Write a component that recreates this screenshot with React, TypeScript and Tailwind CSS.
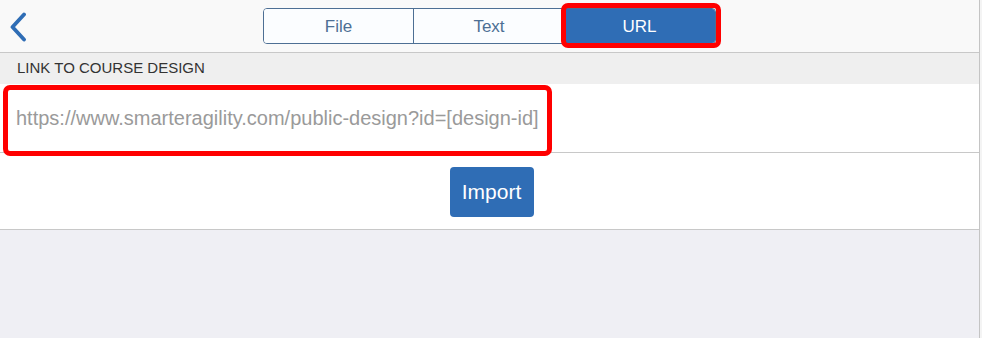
import React from "react";

export default function App() {
  return (
    <div
      className="w-[982px] h-[338px] bg-[#efeff4] flex overflow-hidden"
      style={{ fontFamily: '"Liberation Sans", Arial, sans-serif' }}
    >
      <div className="w-[980px] border-r border-[#c4c4c4] flex flex-col relative">
        {/* Header */}
        <div className="h-[53px] bg-[#f9f9f9] border-b border-[#c8c8c8] flex items-center justify-center relative">
          <button className="absolute left-[8px] top-[12px] w-[20px] h-[30px] flex items-center justify-center">
            <svg width="18" height="30" viewBox="0 0 18 30" fill="none">
              <path d="M15 2.5 L3.5 15 L15 27.5" stroke="#2f6db5" strokeWidth="3.8" strokeLinecap="round" strokeLinejoin="round" />
            </svg>
          </button>
          <div className="flex h-[36px] mt-[-1px] rounded-[4px] border border-[#4d6f94] overflow-hidden">
            <div className="w-[150px] flex items-center justify-center pt-[3px] text-[17px] text-[#4d6f94] bg-[#fbfdff] border-r border-[#4d6f94]">File</div>
            <div className="w-[150px] flex items-center justify-center pt-[3px] text-[17px] text-[#4d6f94] bg-[#fbfdff]">Text</div>
            <div className="w-[151px] flex items-center justify-center pt-[3px] text-[17px] text-white bg-[#2f6db5]">URL</div>
          </div>
          <div className="absolute left-[561px] top-[3px] w-[160px] h-[45px] border-[5px] border-[#ff0000] rounded-[7px]" />
        </div>

        {/* Section header */}
        <div className="h-[31px] bg-[#efefef] flex items-center pl-[17px] text-[15px] text-[#333333]">
          LINK TO COURSE DESIGN
        </div>

        {/* Input row */}
        <div className="h-[69px] bg-white border-b border-[#c8c8c8] flex items-center relative">
          <input
            className="w-full h-full pl-[16px] text-[20px] outline-none bg-transparent placeholder:text-[#9a9a9a]"
            placeholder="https://www.smarteragility.com/public-design?id=[design-id]"
            style={{ fontFamily: '"Liberation Sans", Arial, sans-serif' }}
          />
          <div className="absolute left-[3px] top-[1px] w-[549px] h-[71px] border-[5px] border-[#ff0000] rounded-[7px] pointer-events-none" />
        </div>

        {/* Import row */}
        <div className="h-[77px] bg-white border-b border-[#c8c8c8] flex items-center justify-center">
          <button className="w-[84px] h-[50px] mt-[1px] ml-[4px] rounded-[4px] bg-[#2f6db5] text-white text-[21px]">
            Import
          </button>
        </div>
      </div>
      <div className="flex-1 bg-[#f4f4f4]" />
    </div>
  );
}
